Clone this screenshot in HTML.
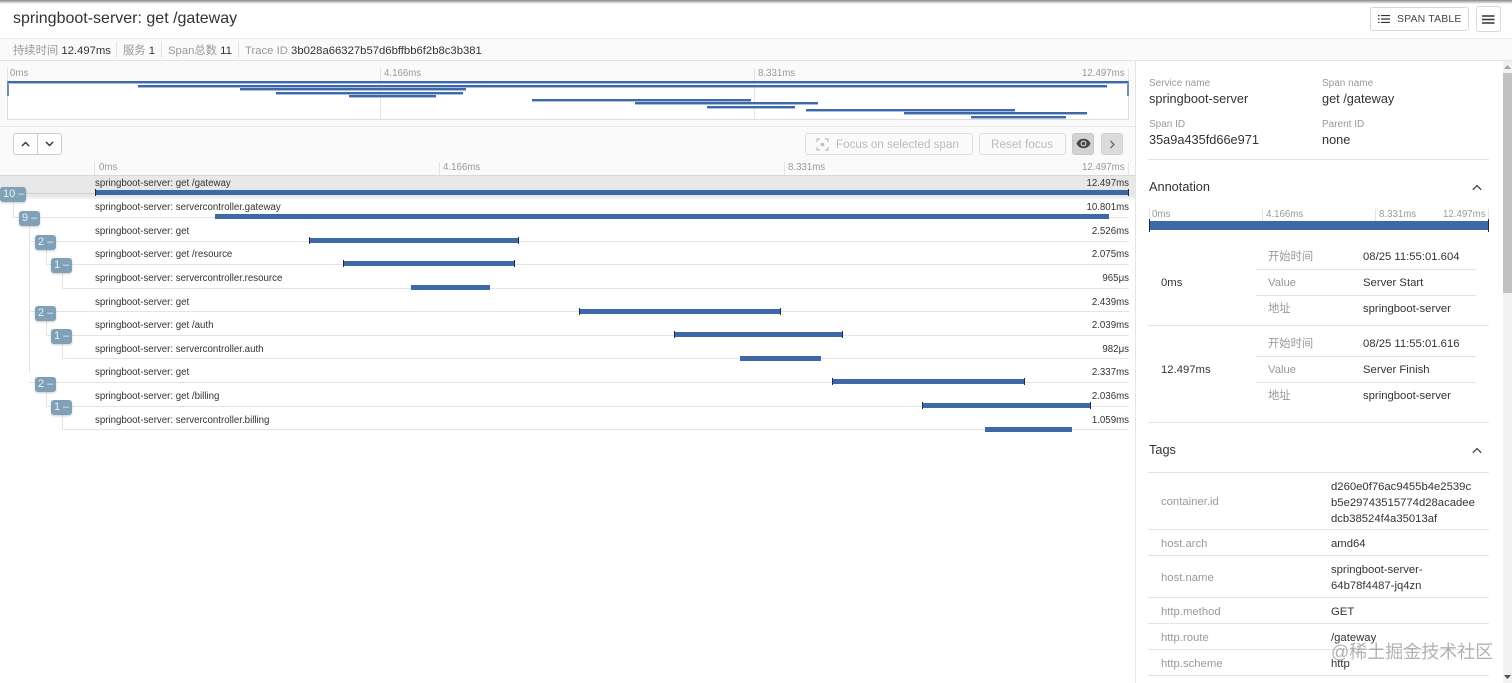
<!DOCTYPE html>
<html lang="zh"><head><meta charset="utf-8"><title>springboot-server: get /gateway</title>
<style>
html,body{margin:0;padding:0;background:#fff;overflow:hidden}
body{width:1512px;height:683px;position:relative;font-family:"Liberation Sans","Noto Sans CJK SC",sans-serif;color:#333;overflow:hidden}
.a,.t,.b,.l,.tg{position:absolute}
.t{white-space:nowrap;line-height:14px}
.g{color:#999}
.s10{font-size:9.7px}.s10b{font-size:10px}.s12{font-size:11.3px;margin-top:1px}.s13{font-size:12.75px}
.b{background:#3f68a8}
.m{position:absolute;background:#3f68a8;height:2px;box-shadow:0 1px 0 #a9bfdf}
.l{background:#e4e4e4}
.tg{background:#7fa0b6;color:#e6f0f6;border-radius:3px;height:15px;line-height:14px;font-size:11px;width:21px;text-align:left;padding-left:3px;box-sizing:border-box;box-shadow:0 1px 2px rgba(0,0,0,.2)}
.cap{position:absolute;width:1px;height:7px;background:#1d2b45}
.btn{position:absolute;box-sizing:border-box;border:1px solid #ddd;border-radius:3px;background:#fff}
</style></head><body>

<!-- top bar -->
<div class="a" style="left:0;top:0;width:1512px;height:4px;background:linear-gradient(#888,#fff)"></div>
<div class="t" style="left:13px;top:10px;font-size:16px;line-height:18px;color:#333">springboot-server: get /gateway</div>
<div class="btn" style="left:1370px;top:7px;width:99px;height:24px;border-color:#d8d8d8"></div>
<svg class="a" style="left:1378px;top:15px" width="12" height="8" viewBox="0 0 12 8"><path d="M0 .5h1.6M3 .5h9M0 4h1.6M3 4h9M0 7.5h1.6M3 7.5h9" stroke="#333" stroke-width="1.3" fill="none"/></svg>
<div class="t" style="left:1397px;top:12px;font-size:10.5px;color:#444;letter-spacing:.15px">SPAN TABLE</div>
<div class="btn" style="left:1476px;top:6px;width:25px;height:26px;border-color:#d8d8d8"></div>
<svg class="a" style="left:1482px;top:15px" width="13" height="9" viewBox="0 0 13 9"><path d="M0 1h12.5M0 4.500h12.500M0 8h12.500" stroke="#333" stroke-width="1.500" fill="none"/></svg>

<!-- info bar -->
<div class="a" style="left:0;top:38px;width:1512px;height:23px;background:#fafafa;border-top:1px solid #e8e8e8;border-bottom:1px solid #e4e4e4;box-sizing:border-box"></div>
<div class="t s12" style="left:13px;top:42.500px"><span class="g">持续时间</span> 12.497ms</div>
<div class="l" style="left:116px;top:42px;width:1px;height:16px"></div>
<div class="t s12" style="left:123px;top:42.500px"><span class="g">服务</span> 1</div>
<div class="l" style="left:161px;top:42px;width:1px;height:16px"></div>
<div class="t s12" style="left:168px;top:42.500px"><span class="g">Span总数</span> 11</div>
<div class="l" style="left:238px;top:42px;width:1px;height:16px"></div>
<div class="t s12" style="left:245px;top:42.500px"><span class="g">Trace ID</span> 3b028a66327b57d6bffbb6f2b8c3b381</div>

<!-- minimap -->
<div class="a" style="left:0;top:61px;width:1135px;height:66px;background:#fafafa;border-bottom:1px solid #e6e6e6;box-sizing:border-box"></div>
<div class="a" style="left:7px;top:81px;width:1122px;height:39px;background:#fff;border:1px solid #ddd;box-sizing:border-box"></div>
<div class="l" style="left:7px;top:68px;width:1px;height:13px"></div>
<div class="l" style="left:380px;top:68px;width:1px;height:52px"></div>
<div class="l" style="left:754px;top:68px;width:1px;height:52px"></div>
<div class="l" style="left:1128px;top:68px;width:1px;height:13px"></div>
<div class="t s10 g" style="left:10px;top:67px">0ms</div>
<div class="t s10 g" style="left:384px;top:67px">4.166ms</div>
<div class="t s10 g" style="left:758px;top:67px">8.331ms</div>
<div class="t s10 g" style="left:1082px;top:67px">12.497ms</div>
<div class="a" style="left:7px;top:81px;width:2px;height:15px;background:#6d8fa8"></div>
<div class="a" style="left:1127px;top:81px;width:2px;height:15px;background:#6d8fa8"></div>
<div class="m" style="left:8px;top:81px;width:1120px"></div>
<div class="m" style="left:138px;top:85px;width:969px"></div>
<div class="m" style="left:240px;top:88px;width:226px"></div>
<div class="m" style="left:276px;top:92px;width:187px"></div>
<div class="m" style="left:349px;top:95px;width:87px"></div>
<div class="m" style="left:532px;top:99px;width:219px"></div>
<div class="m" style="left:635px;top:102px;width:183px"></div>
<div class="m" style="left:707px;top:106px;width:88px"></div>
<div class="m" style="left:806px;top:109px;width:209px"></div>
<div class="m" style="left:904px;top:112px;width:183px"></div>
<div class="m" style="left:971px;top:116px;width:95px"></div>

<!-- toolbar -->
<div class="a" style="left:0;top:127px;width:1135px;height:48px;background:#fafafa"></div>
<div class="btn" style="left:13px;top:133px;width:49px;height:22px;border-color:#ccc"></div>
<div class="l" style="left:37px;top:133px;width:1px;height:22px;background:#ccc"></div>
<svg class="a" style="left:21px;top:141px" width="9" height="6" viewBox="0 0 9 6"><path d="M1 5l3.500-3.500L8 5" stroke="#333" stroke-width="1.400" fill="none"/></svg>
<svg class="a" style="left:45px;top:141px" width="9" height="6" viewBox="0 0 9 6"><path d="M1 1l3.500 3.500L8 1" stroke="#333" stroke-width="1.400" fill="none"/></svg>
<div class="btn" style="left:805px;top:133px;width:168px;height:22px;background:#fafafa"></div>
<svg class="a" style="left:816px;top:138px" width="13" height="13" viewBox="0 0 13 13"><path d="M1 4V1h3M9 1h3v3M12 9v3H9M4 12H1V9" stroke="#bbb" stroke-width="1.200" fill="none"/><circle cx="6.500" cy="6.500" r="1.800" fill="#bbb"/></svg>
<div class="t" style="left:836px;top:138px;color:#bbb;font-size:11.65px">Focus on selected span</div>
<div class="btn" style="left:979px;top:133px;width:87px;height:22px;background:#fafafa"></div>
<div class="t" style="left:991px;top:138px;color:#bbb;font-size:11.75px">Reset focus</div>
<div class="btn" style="left:1072px;top:133px;width:22px;height:22px;background:#d2d2d2;border-color:#c8c8c8"></div>
<svg class="a" style="left:1076px;top:138px" width="15" height="11" viewBox="0 0 15 11"><path d="M.5 5.500C2 2.300 4.500.8 7.500.8s5.500 1.500 7 4.700c-1.500 3.200-4 4.700-7 4.700s-5.500-1.500-7-4.700z" fill="#444"/><circle cx="7.500" cy="5.500" r="3" fill="#d2d2d2"/><circle cx="7.500" cy="5.500" r="1.800" fill="#444"/></svg>
<div class="btn" style="left:1101px;top:133px;width:22px;height:22px;background:#dcdcdc;border-color:#d2d2d2"></div>
<svg class="a" style="left:1109px;top:140px" width="7" height="9" viewBox="0 0 7 9"><path d="M1.500 1l3.500 3.500L1.500 8" stroke="#666" stroke-width="1.300" fill="none"/></svg>

<!-- ruler -->
<div class="l" style="left:94px;top:162px;width:1px;height:13px"></div>
<div class="l" style="left:439px;top:162px;width:1px;height:13px"></div>
<div class="l" style="left:784px;top:162px;width:1px;height:13px"></div>
<div class="l" style="left:1128px;top:162px;width:1px;height:13px"></div>
<div class="t s10 g" style="left:99px;top:161px">0ms</div>
<div class="t s10 g" style="left:443px;top:161px">4.166ms</div>
<div class="t s10 g" style="left:788px;top:161px">8.331ms</div>
<div class="t s10 g" style="left:1082px;top:161px">12.497ms</div>

<!-- selected row -->
<div class="a" style="left:0;top:175px;width:1135px;height:24px;background:#e8e8e8;border-top:1px solid #d8d8d8;box-sizing:border-box"></div>
<div class="a" style="left:0;top:197px;width:1135px;height:2px;background:#eef1f6"></div>

<!-- row lines -->
<div class="l" style="left:26px;top:193px;width:68px;height:1px;background:#d0d0d0"></div>
<div class="l" style="left:13px;top:200px;width:1px;height:18px"></div>
<div class="l" style="left:13px;top:217px;width:1116px;height:1px"></div>
<div class="l" style="left:29px;top:225px;width:1px;height:148px"></div>
<div class="l" style="left:29px;top:241px;width:1100px;height:1px"></div>
<div class="l" style="left:46px;top:249px;width:1px;height:15px"></div>
<div class="l" style="left:46px;top:264px;width:1083px;height:1px"></div>
<div class="l" style="left:62px;top:272px;width:1px;height:16px"></div>
<div class="l" style="left:62px;top:288px;width:1067px;height:1px"></div>
<div class="l" style="left:30px;top:311px;width:1099px;height:1px"></div>
<div class="l" style="left:46px;top:320px;width:1px;height:15px"></div>
<div class="l" style="left:46px;top:335px;width:1083px;height:1px"></div>
<div class="l" style="left:62px;top:343px;width:1px;height:15px"></div>
<div class="l" style="left:62px;top:358px;width:1067px;height:1px"></div>
<div class="l" style="left:29px;top:382px;width:1100px;height:1px"></div>
<div class="l" style="left:46px;top:391px;width:1px;height:15px"></div>
<div class="l" style="left:46px;top:406px;width:1083px;height:1px"></div>
<div class="l" style="left:62px;top:414px;width:1px;height:15px"></div>
<div class="l" style="left:62px;top:429px;width:1067px;height:1px"></div>

<!-- toggles -->
<div class="tg" style="left:0;top:187px;width:26px;height:15px">10 –</div>
<div class="tg" style="left:19px;top:211px">9 –</div>
<div class="tg" style="left:35px;top:235px">2 –</div>
<div class="tg" style="left:51px;top:258px">1 –</div>
<div class="tg" style="left:35px;top:306px">2 –</div>
<div class="tg" style="left:51px;top:329px">1 –</div>
<div class="tg" style="left:35px;top:377px">2 –</div>
<div class="tg" style="left:51px;top:400px">1 –</div>

<!-- row text -->
<div class="t s10" style="left:95px;top:177px">springboot-server: get /gateway</div>
<div class="t s10" style="left:95px;top:201px">springboot-server: servercontroller.gateway</div>
<div class="t s10" style="left:95px;top:225px">springboot-server: get</div>
<div class="t s10" style="left:95px;top:248px">springboot-server: get /resource</div>
<div class="t s10" style="left:95px;top:272px">springboot-server: servercontroller.resource</div>
<div class="t s10" style="left:95px;top:296px">springboot-server: get</div>
<div class="t s10" style="left:95px;top:319px">springboot-server: get /auth</div>
<div class="t s10" style="left:95px;top:343px">springboot-server: servercontroller.auth</div>
<div class="t s10" style="left:95px;top:366px">springboot-server: get</div>
<div class="t s10" style="left:95px;top:390px">springboot-server: get /billing</div>
<div class="t s10" style="left:95px;top:414px">springboot-server: servercontroller.billing</div>

<div class="t s10" style="right:383px;top:177px">12.497ms</div>
<div class="t s10" style="right:383px;top:201px">10.801ms</div>
<div class="t s10" style="right:383px;top:225px">2.526ms</div>
<div class="t s10" style="right:383px;top:248px">2.075ms</div>
<div class="t s10" style="right:383px;top:272px">965μs</div>
<div class="t s10" style="right:383px;top:296px">2.439ms</div>
<div class="t s10" style="right:383px;top:319px">2.039ms</div>
<div class="t s10" style="right:383px;top:343px">982μs</div>
<div class="t s10" style="right:383px;top:366px">2.337ms</div>
<div class="t s10" style="right:383px;top:390px">2.036ms</div>
<div class="t s10" style="right:383px;top:414px">1.059ms</div>

<!-- bars -->
<div class="b" style="left:95px;top:190px;width:1034px;height:5px"></div>
<div class="cap" style="left:95px;top:189px"></div><div class="cap" style="left:1128px;top:189px"></div>
<div class="b" style="left:215px;top:214px;width:894px;height:5px"></div>
<div class="b" style="left:309px;top:237.500px;width:210px;height:5px"></div>
<div class="cap" style="left:309px;top:236.500px"></div><div class="cap" style="left:518px;top:236.500px"></div>
<div class="b" style="left:343px;top:261px;width:172px;height:5px"></div>
<div class="cap" style="left:343px;top:260px"></div><div class="cap" style="left:514px;top:260px"></div>
<div class="b" style="left:411px;top:285px;width:79px;height:5px"></div>
<div class="b" style="left:579px;top:308.500px;width:202px;height:5px"></div>
<div class="cap" style="left:579px;top:307.500px"></div><div class="cap" style="left:780px;top:307.500px"></div>
<div class="b" style="left:674px;top:332px;width:169px;height:5px"></div>
<div class="cap" style="left:674px;top:331px"></div><div class="cap" style="left:842px;top:331px"></div>
<div class="b" style="left:740px;top:355.500px;width:81px;height:5px"></div>
<div class="b" style="left:832px;top:379px;width:193px;height:5px"></div>
<div class="cap" style="left:832px;top:378px"></div><div class="cap" style="left:1024px;top:378px"></div>
<div class="b" style="left:922px;top:403px;width:169px;height:5px"></div>
<div class="cap" style="left:922px;top:402px"></div><div class="cap" style="left:1090px;top:402px"></div>
<div class="b" style="left:985px;top:426.500px;width:87px;height:5px"></div>

<!-- right panel -->
<div class="a" style="left:1135px;top:61px;width:1px;height:622px;background:#e4e4e4"></div>
<div class="a" style="left:1503px;top:61px;width:9px;height:622px;background:#f1f1f1"></div>
<div class="a" style="left:1503px;top:73px;width:9px;height:220px;background:#c1c1c1"></div>
<svg class="a" style="left:1504px;top:65px" width="7" height="5"><path d="M3.500 0L7 4H0z" fill="#a3a3a3"/></svg>
<svg class="a" style="left:1504px;top:675px" width="7" height="5"><path d="M0 0h7L3.500 4z" fill="#505050"/></svg>

<div class="t s10b g" style="left:1149px;top:77px">Service name</div>
<div class="t s13" style="left:1149px;top:92px">springboot-server</div>
<div class="t s10b g" style="left:1322px;top:77px">Span name</div>
<div class="t s13" style="left:1322px;top:92px">get /gateway</div>
<div class="t s10b g" style="left:1149px;top:118px">Span ID</div>
<div class="t s13" style="left:1149px;top:133px">35a9a435fd66e971</div>
<div class="t s10b g" style="left:1322px;top:118px">Parent ID</div>
<div class="t s13" style="left:1322px;top:133px">none</div>
<div class="l" style="left:1148px;top:159px;width:341px;height:1px"></div>

<div class="t" style="left:1149px;top:180px;font-size:12.750px">Annotation</div>
<svg class="a" style="left:1472px;top:184px" width="10" height="7" viewBox="0 0 10 7"><path d="M.8 5.800L5 1.500l4.200 4.300" stroke="#444" stroke-width="1.300" fill="none"/></svg>

<div class="l" style="left:1149px;top:209px;width:1px;height:12px"></div>
<div class="l" style="left:1262px;top:209px;width:1px;height:12px"></div>
<div class="l" style="left:1375px;top:209px;width:1px;height:12px"></div>
<div class="l" style="left:1488px;top:209px;width:1px;height:12px"></div>
<div class="t s10 g" style="left:1152px;top:208px">0ms</div>
<div class="t s10 g" style="left:1266px;top:208px">4.166ms</div>
<div class="t s10 g" style="left:1379px;top:208px">8.331ms</div>
<div class="t s10 g" style="left:1443px;top:208px">12.497ms</div>
<div class="b" style="left:1149px;top:221px;width:340px;height:9px"></div>
<div class="a" style="left:1149px;top:219px;width:1px;height:13px;background:#1d2b45"></div>
<div class="a" style="left:1488px;top:219px;width:1px;height:13px;background:#1d2b45"></div>

<div class="t s12" style="left:1161px;top:275px">0ms</div>
<div class="t s12 g" style="left:1268px;top:249px">开始时间</div>
<div class="t s12" style="left:1363px;top:249px">08/25 11:55:01.604</div>
<div class="l" style="left:1256px;top:269px;width:220px;height:1px"></div>
<div class="t s12 g" style="left:1268px;top:275px">Value</div>
<div class="t s12" style="left:1363px;top:275px">Server Start</div>
<div class="l" style="left:1256px;top:295px;width:220px;height:1px"></div>
<div class="t s12 g" style="left:1268px;top:301px">地址</div>
<div class="t s12" style="left:1363px;top:301px">springboot-server</div>
<div class="l" style="left:1148px;top:325px;width:341px;height:1px"></div>

<div class="t s12" style="left:1161px;top:362px">12.497ms</div>
<div class="t s12 g" style="left:1268px;top:336px">开始时间</div>
<div class="t s12" style="left:1363px;top:336px">08/25 11:55:01.616</div>
<div class="l" style="left:1256px;top:356px;width:220px;height:1px"></div>
<div class="t s12 g" style="left:1268px;top:362px">Value</div>
<div class="t s12" style="left:1363px;top:362px">Server Finish</div>
<div class="l" style="left:1256px;top:382px;width:220px;height:1px"></div>
<div class="t s12 g" style="left:1268px;top:388px">地址</div>
<div class="t s12" style="left:1363px;top:388px">springboot-server</div>
<div class="l" style="left:1148px;top:422px;width:341px;height:1px"></div>

<div class="t" style="left:1149px;top:443px;font-size:12.750px">Tags</div>
<svg class="a" style="left:1472px;top:447px" width="10" height="7" viewBox="0 0 10 7"><path d="M.8 5.800L5 1.500l4.200 4.300" stroke="#444" stroke-width="1.300" fill="none"/></svg>
<div class="l" style="left:1148px;top:472px;width:341px;height:1px"></div>
<div class="t s12 g" style="left:1161px;top:494px">container.id</div>
<div class="t s12" style="left:1331px;top:478px;line-height:16px">d260e0f76ac9455b4e2539c<br>b5e29743515774d28acadee<br>dcb38524f4a35013af</div>
<div class="l" style="left:1148px;top:529px;width:341px;height:1px"></div>
<div class="t s12 g" style="left:1161px;top:536px">host.arch</div>
<div class="t s12" style="left:1331px;top:536px">amd64</div>
<div class="l" style="left:1148px;top:555px;width:341px;height:1px"></div>
<div class="t s12 g" style="left:1161px;top:570px">host.name</div>
<div class="t s12" style="left:1331px;top:561px;line-height:16px">springboot-server-<br>64b78f4487-jq4zn</div>
<div class="l" style="left:1148px;top:597px;width:341px;height:1px"></div>
<div class="t s12 g" style="left:1161px;top:604px">http.method</div>
<div class="t s12" style="left:1331px;top:604px">GET</div>
<div class="l" style="left:1148px;top:623px;width:341px;height:1px"></div>
<div class="t s12 g" style="left:1161px;top:630px">http.route</div>
<div class="t s12" style="left:1331px;top:630px">/gateway</div>
<div class="l" style="left:1148px;top:649px;width:341px;height:1px"></div>
<div class="t s12 g" style="left:1161px;top:656px">http.scheme</div>
<div class="t s12" style="left:1331px;top:656px">http</div>
<div class="l" style="left:1148px;top:675px;width:341px;height:1px"></div>

<!-- watermark -->
<div class="t" style="left:1331px;top:642px;font-size:18px;line-height:20px;color:rgba(130,130,130,.62);white-space:nowrap">@稀土掘金技术社区</div>
</body></html>
